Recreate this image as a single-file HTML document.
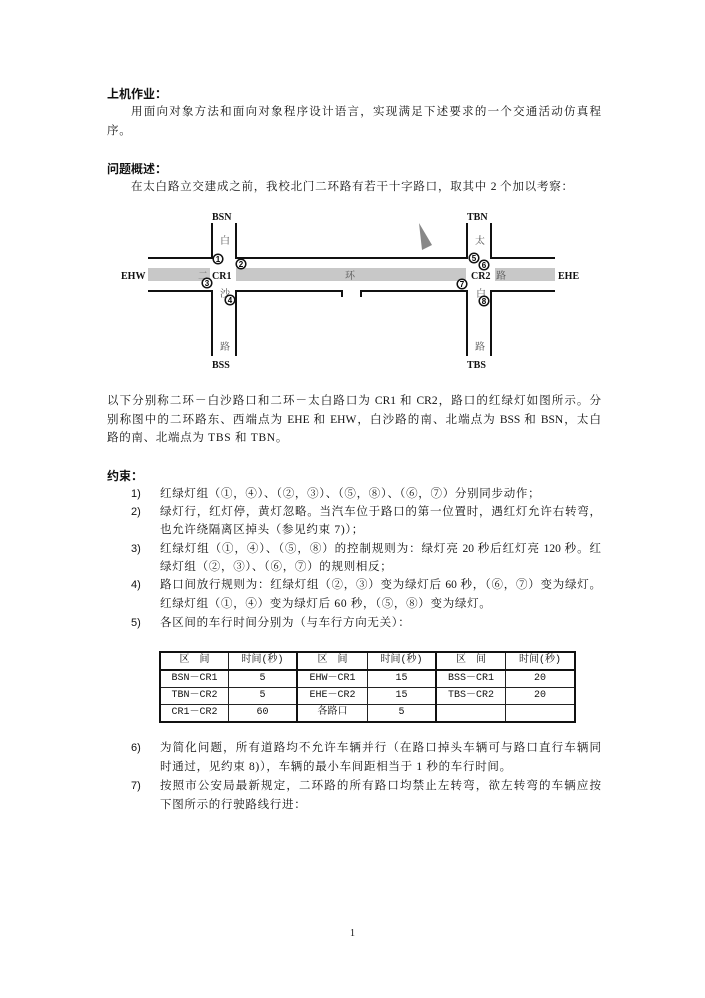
<!DOCTYPE html>
<html><head><meta charset="utf-8"><style>
body{margin:0;background:#fff;}
#p{position:relative;width:705px;height:998px;overflow:hidden;font-family:"Liberation Serif","Noto Serif CJK SC",serif;font-size:11.5px;color:#111;}
.l{position:absolute;white-space:nowrap;line-height:14px;letter-spacing:0.7px;}
.j{text-align:justify;text-align-last:justify;white-space:normal;height:14px;overflow:hidden;letter-spacing:0;}
.h{font-family:"Liberation Sans","Noto Sans CJK SC",sans-serif;font-weight:bold;font-size:12px;letter-spacing:0;}
.n{position:absolute;left:131px;line-height:14px;font-family:"Liberation Sans",sans-serif;font-size:11px;}
table{position:absolute;left:159px;top:651px;border-collapse:collapse;font-family:"Liberation Mono","Noto Serif CJK SC",monospace;font-size:10px;}
td{border:1px solid #222;height:16px;padding:0;text-align:center;line-height:16px;}
</style></head><body><div id="p">
<div class="l h" style="left:107px;top:87px">上机作业：</div>
<div class="l j" style="left:131px;top:105px;width:470px">用面向对象方法和面向对象程序设计语言，实现满足下述要求的一个交通活动仿真程</div>
<div class="l" style="left:107px;top:124px">序。</div>
<div class="l h" style="left:107px;top:162px">问题概述：</div>
<div class="l j" style="left:131px;top:180px;width:442px">在太白路立交建成之前，我校北门二环路有若干十字路口，取其中 2 个加以考察：</div>

<svg style="position:absolute;left:0;top:0" width="705" height="400" font-family="Liberation Serif,Noto Serif CJK SC,serif">
<g fill="#c8c8c8"><rect x="148" y="268" width="62" height="13"/><rect x="236" y="268" width="230" height="13"/><rect x="495" y="268" width="60" height="13"/></g>
<g stroke="#111" stroke-width="2" fill="none">
<path d="M148 258H212V223"/><path d="M236 223V258H467V223"/><path d="M491 223V258H555"/>
<path d="M148 291H212V356"/><path d="M236 356V291H342V297"/><path d="M361 297V291H467V356"/><path d="M491 356V291H555"/>
</g>
<polygon points="419,223 432,245 422,250" fill="#888"/>
<g font-size="10" font-weight="bold" fill="#111">
<text x="212" y="220">BSN</text><text x="212" y="368">BSS</text><text x="467" y="220">TBN</text><text x="467" y="368">TBS</text>
<text x="121" y="279">EHW</text><text x="558" y="279">EHE</text><text x="212" y="279">CR1</text><text x="471" y="279">CR2</text>
</g>
<g font-size="10" fill="#555"><text x="220" y="244">白</text><text x="475" y="244">太</text><text x="198" y="279">二</text><text x="345" y="279">环</text><text x="496" y="279">路</text><text x="220" y="297">沙</text><text x="476" y="297">白</text><text x="220" y="350">路</text><text x="475" y="350">路</text></g>
<g font-family="Liberation Sans,sans-serif" font-size="8" font-weight="bold" text-anchor="middle">
<g fill="#fff" stroke="#111" stroke-width="1.5">
<circle cx="218" cy="259" r="4.8"/><circle cx="241" cy="264" r="4.8"/><circle cx="207" cy="283" r="4.8"/><circle cx="230" cy="300" r="4.8"/>
<circle cx="474" cy="258" r="4.8"/><circle cx="484" cy="265" r="4.8"/><circle cx="462" cy="284" r="4.8"/><circle cx="484" cy="301" r="4.8"/></g>
<text x="218" y="262">1</text><text x="241" y="267">2</text><text x="207" y="286">3</text><text x="230" y="303">4</text>
<text x="474" y="261">5</text><text x="484" y="268">6</text><text x="462" y="287">7</text><text x="484" y="304">8</text>
</g>
</svg>

<div class="l j" style="left:107px;top:394px;width:494px">以下分别称二环－白沙路口和二环－太白路口为 CR1 和 CR2，路口的红绿灯如图所示。分</div>
<div class="l j" style="left:107px;top:413px;width:494px">别称图中的二环路东、西端点为 EHE 和 EHW，白沙路的南、北端点为 BSS 和 BSN，太白</div>
<div class="l" style="left:107px;top:431px">路的南、北端点为 TBS 和 TBN。</div>
<div class="l h" style="left:107px;top:469px">约束：</div>

<div class="n" style="top:487px">1)</div><div class="l" style="left:160px;top:487px">红绿灯组（①，④）、（②，③）、（⑤，⑧）、（⑥，⑦）分别同步动作；</div>
<div class="n" style="top:505px">2)</div><div class="l j" style="left:160px;top:505px;width:441px">绿灯行，红灯停，黄灯忽略。当汽车位于路口的第一位置时，遇红灯允许右转弯，</div>
<div class="l" style="left:160px;top:523px">也允许绕隔离区掉头（参见约束 7)）；</div>
<div class="n" style="top:542px">3)</div><div class="l j" style="left:160px;top:542px;width:441px">红绿灯组（①，④）、（⑤，⑧）的控制规则为：绿灯亮 20 秒后红灯亮 120 秒。红</div>
<div class="l" style="left:160px;top:560px">绿灯组（②，③）、（⑥，⑦）的规则相反；</div>
<div class="n" style="top:578px">4)</div><div class="l j" style="left:160px;top:578px;width:441px">路口间放行规则为：红绿灯组（②，③）变为绿灯后 60 秒，（⑥，⑦）变为绿灯。</div>
<div class="l" style="left:160px;top:597px">红绿灯组（①，④）变为绿灯后 60 秒，（⑤，⑧）变为绿灯。</div>
<div class="n" style="top:616px">5)</div><div class="l" style="left:160px;top:616px">各区间的车行时间分别为（与车行方向无关）：</div>

<table style="border:2px solid #111">
<tr style="border-bottom:2px solid #111"><td style="width:67px">区　间</td><td style="width:67px;border-right:2px solid #111">时间(秒)</td><td style="width:69px">区　间</td><td style="width:67px;border-right:2px solid #111">时间(秒)</td><td style="width:68px">区　间</td><td style="width:68px">时间(秒)</td></tr>
<tr><td>BSN－CR1</td><td style="border-right:2px solid #111">5</td><td>EHW－CR1</td><td style="border-right:2px solid #111">15</td><td>BSS－CR1</td><td>20</td></tr>
<tr><td>TBN－CR2</td><td style="border-right:2px solid #111">5</td><td>EHE－CR2</td><td style="border-right:2px solid #111">15</td><td>TBS－CR2</td><td>20</td></tr>
<tr><td>CR1－CR2</td><td style="border-right:2px solid #111">60</td><td>各路口</td><td style="border-right:2px solid #111">5</td><td></td><td></td></tr>
</table>

<div class="n" style="top:741px">6)</div><div class="l j" style="left:160px;top:741px;width:441px">为简化问题，所有道路均不允许车辆并行（在路口掉头车辆可与路口直行车辆同</div>
<div class="l" style="left:160px;top:760px">时通过，见约束 8)），车辆的最小车间距相当于 1 秒的车行时间。</div>
<div class="n" style="top:779px">7)</div><div class="l j" style="left:160px;top:779px;width:441px">按照市公安局最新规定，二环路的所有路口均禁止左转弯，欲左转弯的车辆应按</div>
<div class="l" style="left:160px;top:798px">下图所示的行驶路线行进：</div>

<div class="l" style="left:350px;top:927px;font-size:10px">1</div>
</div></body></html>
